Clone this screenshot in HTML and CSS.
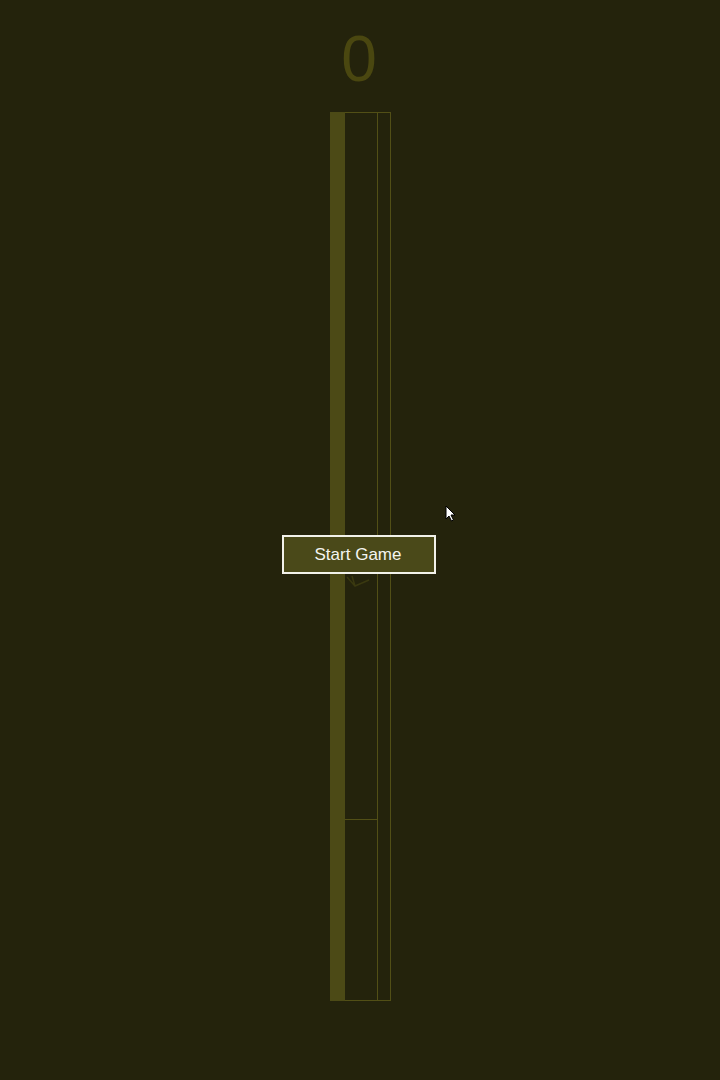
FILE: index.html
```html
<!DOCTYPE html>
<html>
<head>
<meta charset="utf-8">
<link rel="stylesheet" href="styles.css">
</head>
<body>
<div class="page">
  <div class="score">0</div>
  <div class="board">
    <div class="bar"></div>
    <div class="lane">
      <div class="lane-space"></div>
      <div class="lane-block"></div>
    </div>
    <div class="rest"></div>
    <svg class="ghost" width="30" height="20" viewBox="0 0 30 20"><path d="M4 6 L12 15 L26 9 M12 15 L9 5" fill="none" stroke="#3a3910" stroke-width="1.5"/></svg>
  </div>
  <button class="start">Start Game</button>
  <svg class="cursor" width="12" height="18" viewBox="0 0 12 18"><path d="M1 1 L1 14 L4 11 L6.5 16 L8.5 15 L6 10 L10 10 Z" fill="#fff" stroke="#000" stroke-width="1"/></svg>
</div>
</body>
</html>
```
FILE: styles.css
```css
html, body {
  margin: 0;
  padding: 0;
  background: #24230c;
}
.page {
  position: relative;
  width: 720px;
  height: 1080px;
  display: flex;
  flex-direction: column;
  align-items: center;
  font-family: "Liberation Sans", Arial, sans-serif;
}
.score {
  margin-top: 27px;
  height: 85px;
  font-size: 64px;
  line-height: 64px;
  color: #4a4710;
  margin-left: -2px;
}
.board {
  position: relative;
  box-sizing: border-box;
  align-self: flex-start;
  margin-left: 330px;
  width: 61px;
  height: 889px;
  border: 1px solid #524f16;
  display: flex;
}
.bar {
  width: 15px;
  background: #4c4a16;
  margin: -1px 0 -1px -1px;
}
.lane {
  width: 32px;
  border-right: 1px solid #524f16;
  display: flex;
  flex-direction: column;
}
.lane-space {
  flex: 1;
}
.lane-block {
  height: 180px;
  border-top: 1px solid #524f16;
}
.rest {
  flex: 1;
}
.ghost {
  position: absolute;
  left: 12px;
  top: 458px;
}
.start {
  position: absolute;
  left: 282px;
  top: 535px;
  width: 154px;
  height: 39px;
  box-sizing: border-box;
  background: #4a4919;
  border: 2px solid #f2f2ea;
  color: #f4f4f0;
  font-family: "Liberation Sans", Arial, sans-serif;
  font-size: 17px;
  padding: 0 2px 0 0;
  text-align: center;
}
.cursor {
  position: absolute;
  left: 445px;
  top: 505px;
}
```
